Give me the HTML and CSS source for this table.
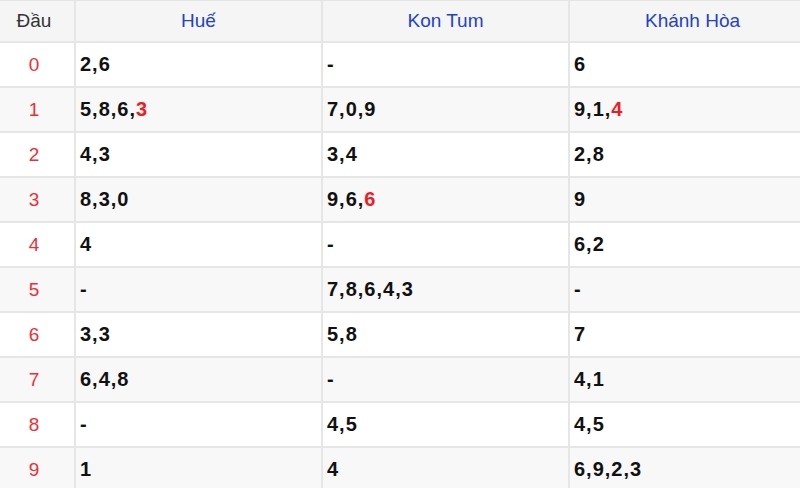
FILE: index.html
```html
<!DOCTYPE html>
<html lang="vi">
<head>
<meta charset="utf-8">
<title>Loto đầu</title>
<link rel="stylesheet" href="styles.css">
</head>
<body>
<table class="loto">
  <colgroup>
    <col class="c-head">
    <col class="c-prov">
    <col class="c-prov">
    <col class="c-prov">
  </colgroup>
  <thead>
    <tr>
      <th class="dau">Đầu</th>
      <th>Huế</th>
      <th>Kon Tum</th>
      <th>Khánh Hòa</th>
    </tr>
  </thead>
  <tbody>
    <tr><td class="d">0</td><td>2,6</td><td>-</td><td>6</td></tr>
    <tr><td class="d">1</td><td>5,8,6,<span class="hl">3</span></td><td>7,0,9</td><td>9,1,<span class="hl">4</span></td></tr>
    <tr><td class="d">2</td><td>4,3</td><td>3,4</td><td>2,8</td></tr>
    <tr><td class="d">3</td><td>8,3,0</td><td>9,6,<span class="hl">6</span></td><td>9</td></tr>
    <tr><td class="d">4</td><td>4</td><td>-</td><td>6,2</td></tr>
    <tr><td class="d">5</td><td>-</td><td>7,8,6,4,3</td><td>-</td></tr>
    <tr><td class="d">6</td><td>3,3</td><td>5,8</td><td>7</td></tr>
    <tr><td class="d">7</td><td>6,4,8</td><td>-</td><td>4,1</td></tr>
    <tr><td class="d">8</td><td>-</td><td>4,5</td><td>4,5</td></tr>
    <tr><td class="d">9</td><td>1</td><td>4</td><td>6,9,2,3</td></tr>
  </tbody>
</table>
</body>
</html>
```
FILE: styles.css
```css
html, body {
  margin: 0;
  padding: 0;
  background: #ffffff;
  overflow: hidden;
}
body {
  font-family: "Liberation Sans", Arial, sans-serif;
  width: 800px;
  height: 488px;
}
.loto {
  border-collapse: separate;
  border-spacing: 0;
  table-layout: fixed;
  width: 817px;
  border-top: 1px solid #e4e4e4;
}
.c-head { width: 76px; }
.c-prov { width: 247px; }
.loto th,
.loto td {
  box-sizing: border-box;
  border-right: 2px solid #e6e6e6;
  border-bottom: 2px solid #e6e6e6;
  padding: 0 4px;
  white-space: nowrap;
}
.loto th {
  height: 42px;
  background: #f5f5f5;
  font-weight: normal;
  font-size: 19px;
  color: #2342c6;
  text-align: center;
}
.loto th.dau {
  color: #333333;
  padding: 0 6px 0 0;
}
.loto td {
  height: 45px;
  font-size: 20px;
  font-weight: bold;
  letter-spacing: 1px;
  color: #111111;
  text-align: left;
}
.loto td.d {
  font-size: 19px;
  font-weight: normal;
  letter-spacing: 0;
  color: #ef2d36;
  text-align: center;
  padding: 0 6px 0 0;
}
.loto tbody tr:nth-child(even) td {
  background: #f8f8f8;
}
.hl {
  color: #ee1c25;
}
```
